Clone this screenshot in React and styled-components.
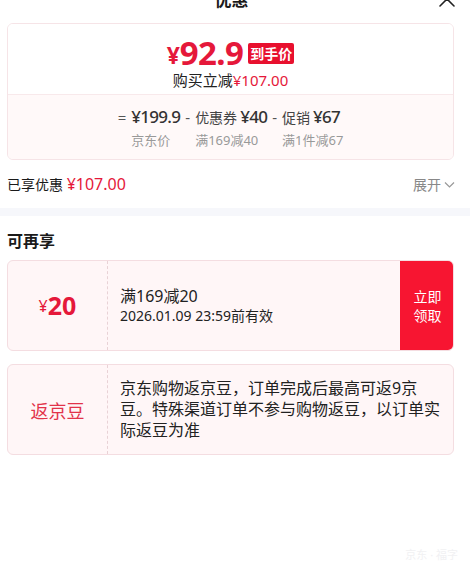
import React from "react";
import styled, { createGlobalStyle } from "styled-components";

const Global = createGlobalStyle`
  html, body { margin: 0; padding: 0; background: #fff; }
  body { font-family: "Noto Sans", "Noto Sans CJK SC", sans-serif; color: #1a1a1a; }
  * { box-sizing: border-box; }
`;

const Page = styled.div`
  min-height: 576px;
  display: flex;
  flex-direction: column;
  overflow: hidden;
`;

const Header = styled.div`
  margin-top: -13px;
  height: 24px;
  padding: 0 14px 0 7px;
  display: grid;
  grid-template-columns: 1fr auto 1fr;
  align-items: center;
`;

const Title = styled.div`
  grid-column: 2;
  font-size: 17px;
  font-weight: 700;
  line-height: 24px;
  font-family: "Noto Sans CJK SC", sans-serif;
`;

const Close = styled.svg`
  grid-column: 3;
  justify-self: end;
  width: 18px;
  height: 18px;
`;

const Section = styled.div`
  padding: 0 16px 0 7px;
`;

const PriceCard = styled.div`
  margin-top: 12px;
  border: 1px solid #f6e4e7;
  border-radius: 6px;
  overflow: hidden;
`;

const PriceTop = styled.div`
  height: 71px;
  display: flex;
  flex-direction: column;
  align-items: center;
  padding-top: 10px;
  background: #fff;
  border-bottom: 1px solid #f8e9eb;
`;

const PriceRow = styled.div`
  display: flex;
  align-items: center;
  height: 36px;
  color: #e5183a;
`;

const Yen = styled.span`
  font-size: ${(p) => p.$size}px;
  font-weight: 700;
  line-height: 1;
  margin-top: ${(p) => p.$mt || 0}px;
`;

const BigNum = styled.span`
  font-size: 33px;
  font-weight: 700;
  line-height: 1;
  letter-spacing: -0.6px;
`;

const Tag = styled.span`
  margin-left: 5px;
  margin-top: 2px;
  height: 21px;
  padding: 0 2px;
  background: #e8102e;
  color: #fff;
  font-family: "Noto Sans CJK SC", sans-serif;
  font-size: 14px;
  font-weight: 700;
  line-height: 21px;
  border-radius: 2px;
`;

const Sub = styled.div`
  font-size: 15px;
  line-height: 20px;
  color: #222;
`;

const Red = styled.span`
  color: ${(p) => p.$color || "#e5183a"};
  font-size: ${(p) => (p.$size ? p.$size + "px" : "inherit")};
`;

const Breakdown = styled.div`
  background: #fff9f9;
  padding: 10px 0 10px;
  display: flex;
  justify-content: center;
  gap: 5px;
`;

const Op = styled.span`
  font-size: 15px;
  line-height: 24px;
  color: #555;
`;

const Col = styled.div`
  display: flex;
  flex-direction: column;
  align-items: flex-start;
`;

const Val = styled.div`
  height: 24px;
  display: flex;
  align-items: baseline;
  gap: 3px;
  font-size: 17px;
  letter-spacing: -0.7px;
  font-weight: 500;
  color: #333;
  line-height: 24px;
  white-space: nowrap;
`;

const ValLabel = styled.span`
  font-size: 14px;
  font-weight: 400;
  letter-spacing: 0;
  color: #444;
`;

const Label = styled.div`
  margin-top: 2px;
  font-size: 13px;
  line-height: 18px;
  color: #999;
  white-space: nowrap;
`;

const SavedRow = styled.div`
  height: 48px;
  display: flex;
  align-items: center;
  justify-content: space-between;
  font-size: 14px;
`;

const Expand = styled.div`
  display: flex;
  align-items: center;
  gap: 3px;
  color: #888;
  font-size: 14px;
  margin-right: -1px;
`;

const Band = styled.div`
  height: 8px;
  background: #f6f7fb;
`;

const SectionTitle = styled.div`
  margin-top: 12px;
  font-size: 16px;
  font-weight: 700;
  line-height: 24px;
  font-family: "Noto Sans CJK SC", sans-serif;
`;

const Coupon = styled.div`
  margin-top: ${(p) => p.$mt}px;
  height: ${(p) => p.$h}px;
  display: grid;
  grid-template-columns: 100px 1fr ${(p) => (p.$button ? "53px" : "0px")};
  background: #fff6f7;
  border: 1px solid #f4dde1;
  border-radius: 6px;
  overflow: hidden;
`;

const CouponLeft = styled.div`
  border-right: 1px dashed #e9d2d6;
  display: flex;
  align-items: center;
  justify-content: center;
  color: ${(p) => p.$color || "#e5183a"};
  font-size: ${(p) => p.$size || 16}px;
`;

const CouponAmount = styled.span`
  font-size: 25px;
  font-weight: 700;
  line-height: 1;
`;

const CouponBody = styled.div`
  padding: 0 8px 0 12px;
  display: flex;
  flex-direction: column;
  justify-content: center;
  color: #222;
`;

const Line = styled.div`
  font-size: ${(p) => p.$size}px;
  line-height: ${(p) => p.$lh}px;
`;

const GetBtn = styled.div`
  background: #f71531;
  color: #fff;
  display: flex;
  align-items: center;
  justify-content: center;
  text-align: center;
  font-size: 14px;
  line-height: 19px;
  padding-left: 2px;
`;

const Watermark = styled.div`
  margin-top: auto;
  align-self: flex-end;
  padding: 0 12px 14px 0;
  font-size: 11px;
  color: #f1f1f3;
`;

export default function App() {
  return (
    <Page>
      <Global />
      <Header>
        <Title>优惠</Title>
        <Close viewBox="0 0 18 18" fill="none" stroke="#222" strokeWidth="1.6" strokeLinecap="round">
          <path d="M2 2 L16 16 M16 2 L2 16" />
        </Close>
      </Header>

      <Section>
        <PriceCard>
          <PriceTop>
            <PriceRow>
              <Yen $size={23} $mt={6}>¥</Yen>
              <BigNum>92.9</BigNum>
              <Tag>到手价</Tag>
            </PriceRow>
            <Sub>
              购买立减<Red>¥107.00</Red>
            </Sub>
          </PriceTop>
          <Breakdown>
            <Op>=</Op>
            <Col>
              <Val>¥199.9</Val>
              <Label>京东价</Label>
            </Col>
            <Op>-</Op>
            <Col>
              <Val>
                <ValLabel>优惠券</ValLabel>¥40
              </Val>
              <Label>满169减40</Label>
            </Col>
            <Op>-</Op>
            <Col>
              <Val>
                <ValLabel>促销</ValLabel>¥67
              </Val>
              <Label>满1件减67</Label>
            </Col>
          </Breakdown>
        </PriceCard>

        <SavedRow>
          <span>
            已享优惠 <Red $size={16}>¥107.00</Red>
          </span>
          <Expand>
            展开
            <svg width="11" height="11" viewBox="0 0 11 11" fill="none" stroke="#999" strokeWidth="1.2">
              <path d="M1 3.5 L5.5 8 L10 3.5" />
            </svg>
          </Expand>
        </SavedRow>
      </Section>

      <Band />

      <Section>
        <SectionTitle>可再享</SectionTitle>
        <Coupon $mt={8} $h={91} $button>
          <CouponLeft $size={16}>
            <span>¥</span>
            <CouponAmount>20</CouponAmount>
          </CouponLeft>
          <CouponBody>
            <Line $size={16} $lh={20}>满169减20</Line>
            <Line $size={14} $lh={20}>2026.01.09 23:59前有效</Line>
          </CouponBody>
          <GetBtn>
            立即
            <br />
            领取
          </GetBtn>
        </Coupon>

        <Coupon $mt={13} $h={91}>
          <CouponLeft $size={18} $color="#e2334a">返京豆</CouponLeft>
          <CouponBody>
            <Line $size={16} $lh={21}>
              京东购物返京豆，订单完成后最高可返9京豆。特殊渠道订单不参与购物返豆，以订单实际返豆为准
            </Line>
          </CouponBody>
        </Coupon>
      </Section>

      <Watermark>京东 · 福字</Watermark>
    </Page>
  );
}
